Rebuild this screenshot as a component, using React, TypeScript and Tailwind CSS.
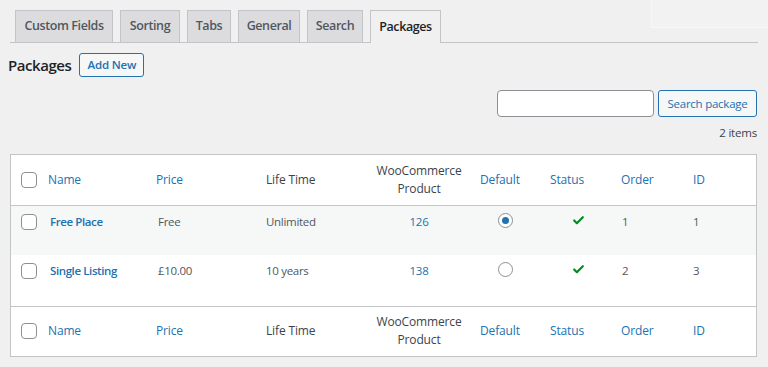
import { Check } from 'lucide-react'

const tabs = [
    { label: 'Custom Fields', w: 'w-[98px]' },
    { label: 'Sorting', w: 'w-[60px]' },
    { label: 'Tabs', w: 'w-[44px]' },
    { label: 'General', w: 'w-[62px]' },
    { label: 'Search', w: 'w-[56px]' },
    { label: 'Packages', w: 'w-[71px]' },
]

const rows = [
    { name: 'Free Place', price: 'Free', life: 'Unlimited', product: '126', isDefault: true, order: '1', id: '1' },
    { name: 'Single Listing', price: '£10.00', life: '10 years', product: '138', isDefault: false, order: '2', id: '3' },
]

const Checkbox = () => (
    <span className="block w-4 h-4 rounded-[4px] border border-[#8c8f94] bg-white" />
)

const HeadRow = ({ top }: { top?: boolean }) => (
    <tr className={top ? 'border-b border-[#c3c4c7]' : 'border-t border-[#c3c4c7]'}>
        <th className="h-[50px] pl-[10px] align-middle">
            <Checkbox />
        </th>
        <th className="pl-2 text-left font-normal text-[#2271b1]">Name</th>
        <th className="pl-2 text-left font-normal text-[#2271b1]">Price</th>
        <th className="pl-2 text-left font-normal text-[#3c434a]">Life Time</th>
        <th className="text-center font-normal leading-[18px] text-[#3c434a]">
            WooCommerce
            <br />
            Product
        </th>
        <th className="pl-2 text-left font-normal text-[#2271b1]">Default</th>
        <th className="pl-2 text-left font-normal text-[#2271b1]">Status</th>
        <th className="pl-2 text-left font-normal text-[#2271b1]">Order</th>
        <th className="pl-2 text-left font-normal text-[#2271b1]">ID</th>
    </tr>
)

export default function App() {
    return (
        <div
            className="w-[768px] h-[367px] bg-[#f0f0f1] overflow-hidden text-[13px] text-[#3c434a] relative"
            style={{ fontFamily: '"Open Sans", "Noto Sans", sans-serif' }}
        >
            {/* faint box top right */}
            <div className="absolute right-0 top-0 w-[117px] h-[28px] border-l border-b border-[#f7f7f7] bg-[#f2f2f3]" />

            <div className="px-[10px] pt-[10px]">
                <div className="flex items-end gap-[7px] pl-[5px] border-b border-[#c3c4c7] h-[33px]">
                    {tabs.map(t => (
                        <div
                            key={t.label}
                            className={
                                t.label === 'Packages'
                                    ? `${t.w} h-[33px] -mb-px flex items-center justify-center border border-b-0 border-[#c3c4c7] bg-[#f0f0f1] text-[#1d2327] font-semibold text-[12.5px] tracking-[-0.4px]`
                                    : `${t.w} h-[32px] flex items-center justify-center border border-b-0 border-[#c3c4c7] bg-[#dcdcde] text-[#50575e] font-semibold text-[12.5px] tracking-[-0.4px]`
                            }
                        >
                            {t.label}
                        </div>
                    ))}
                </div>
            </div>

            <div className="flex items-center gap-2 pl-2 mt-[10px]">
                <h1 className="text-[15px] font-semibold tracking-[-0.45px] text-[#1d2327]">Packages</h1>
                <button className="w-[65px] h-[24px] rounded-[3px] border border-[#2271b1] bg-[#f6f7f7] text-[#2271b1] text-[11.5px] tracking-[-0.2px] font-semibold">
                    Add New
                </button>
            </div>

            <div className="flex justify-end gap-1 pr-[11px] mt-[13px]">
                <input className="w-[157px] h-[27px] rounded-[4px] border border-[#8c8f94] bg-white" />
                <button className="w-[99px] h-[27px] rounded-[3px] border border-[#2271b1] bg-[#f6f7f7] text-[#2271b1] text-[11.5px] tracking-[-0.25px]">
                    Search package
                </button>
            </div>
            <div className="text-right pr-[11px] mt-[6px] text-[11.5px] tracking-[-0.2px] text-[#3c434a] leading-[20px]">2 items</div>

            <div className="mx-[10px] mt-[11px] w-[747px] border border-[#c3c4c7] bg-white">
                <table className="w-full table-fixed border-collapse text-[12px] tracking-[-0.15px]">
                    <colgroup>
                        <col className="w-[29px]" />
                        <col className="w-[108px]" />
                        <col className="w-[110px]" />
                        <col className="w-[108px]" />
                        <col className="w-[106px]" />
                        <col className="w-[70px]" />
                        <col className="w-[71px]" />
                        <col className="w-[72px]" />
                        <col />
                    </colgroup>
                    <thead>
                        <HeadRow top />
                    </thead>
                    <tbody className="text-[11.5px] tracking-[-0.3px]">
                        {rows.map((r, i) => (
                            <tr key={r.name} className={i % 2 === 0 ? 'bg-[#f6f7f7] h-[50px]' : 'bg-white h-[51px]'}>
                                <td className="pl-[10px] pt-[8px] align-top">
                                    <Checkbox />
                                </td>
                                <td className="pl-[10px] pt-[7px] align-top font-semibold tracking-[-0.4px] text-[#2271b1]">{r.name}</td>
                                <td className="pl-[10px] pt-[7px] align-top text-[#50575e]">{r.price}</td>
                                <td className="pl-2 pt-[7px] align-top text-[#50575e]">{r.life}</td>
                                <td className="pt-[7px] align-top text-center text-[#2271b1]">{r.product}</td>
                                <td className="pl-[26px] pt-[7px] align-top">
                                    <span className="w-[15px] h-[15px] rounded-full border border-[#8c8f94] bg-white flex items-center justify-center">
                                        {r.isDefault && <span className="w-[7px] h-[7px] rounded-full bg-[#2271b1]" />}
                                    </span>
                                </td>
                                <td className="pl-[30px] pt-[8px] align-top">
                                    <Check size={13} strokeWidth={4} className="text-[#008a20]" />
                                </td>
                                <td className="pl-[9px] pt-[7px] align-top text-[#50575e]">{r.order}</td>
                                <td className="pl-2 pt-[7px] align-top text-[#50575e]">{r.id}</td>
                            </tr>
                        ))}
                    </tbody>
                    <tfoot>
                        <HeadRow />
                    </tfoot>
                </table>
            </div>
        </div>
    )
}
